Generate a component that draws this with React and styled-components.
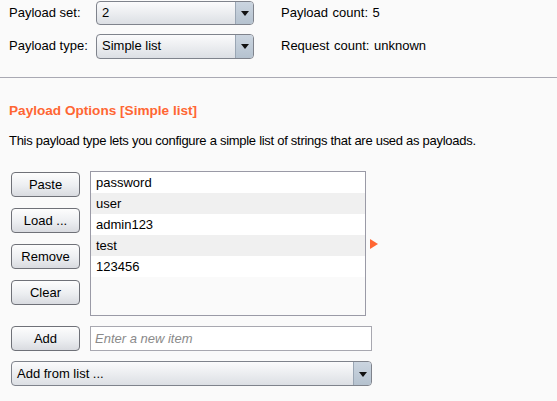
import React from "react";
import styled, { createGlobalStyle } from "styled-components";

const Global = createGlobalStyle`
  html, body { margin: 0; padding: 0; background: #fafafa; }
  body {
    font-family: "Liberation Sans", Arial, sans-serif;
    font-size: 13px;
    color: #000;
    width: 557px;
    height: 401px;
    overflow: hidden;
  }
`;

const Page = styled.div`
  width: 557px;
  height: 401px;
  background: #fafafa;
`;

const TopSection = styled.div`
  height: 76px;
  padding: 1px 0 0 9px;
  border-bottom: 1px solid #a9a9b3;
  display: grid;
  grid-template-columns: 87px 158px auto;
  grid-auto-rows: 24px;
  row-gap: 9px;
  column-gap: 0;
  align-items: center;
`;

const Label = styled.div`
  line-height: 16px;
  white-space: nowrap;
`;

const Stat = styled.div`
  padding-left: 27px;
  line-height: 16px;
  white-space: nowrap;
  word-spacing: 1px;
`;

const Select = styled.div`
  box-sizing: border-box;
  width: ${(p) => p.$w}px;
  height: ${(p) => p.$h || 24}px;
  border: 1px solid #7f838c;
  border-radius: 4px;
  background: linear-gradient(#fbfbfc, #eaecef 55%, #dcdfe4);
  display: flex;
  align-items: stretch;
  overflow: hidden;
`;

const SelectValue = styled.div`
  flex: 1;
  padding-left: 5px;
  display: flex;
  align-items: center;
  line-height: 16px;
`;

const SelectArrow = styled.div`
  width: 17px;
  border-left: 1px solid #9aa6b4;
  background: linear-gradient(#cbd5e0, #b5c2cf);
  display: flex;
  align-items: center;
  justify-content: center;
  &::after {
    content: "";
    border-left: 4px solid transparent;
    border-right: 4px solid transparent;
    border-top: 5px solid #111;
    margin-top: 1px;
  }
`;

const Options = styled.div`
  padding: 25px 0 0 9px;
`;

const Heading = styled.div`
  color: #ff6633;
  font-weight: bold;
  font-size: 13.6px;
  line-height: 16px;
`;

const Description = styled.div`
  margin-top: 14px;
  line-height: 16px;
  letter-spacing: -0.28px;
`;

const Editor = styled.div`
  margin-top: 22px;
  padding-left: 2px;
  display: flex;
  align-items: flex-start;
  gap: 10px;
`;

const ButtonColumn = styled.div`
  display: flex;
  flex-direction: column;
  gap: 11px;
  padding-top: 1px;
`;

const Button = styled.button`
  box-sizing: border-box;
  width: 69px;
  height: 25px;
  padding: 0;
  border: 1px solid #6f7178;
  border-radius: 4px;
  background: linear-gradient(#fdfdfd, #eceef1 55%, #d9dbe0);
  font-family: "Liberation Sans", Arial, sans-serif;
  font-size: 13px;
  color: #000;
`;

const ListWrap = styled.div`
  display: flex;
  align-items: center;
  gap: 4px;
`;

const List = styled.div`
  box-sizing: border-box;
  width: 276px;
  height: 145px;
  border: 1px solid #9a9aa6;
  background: #fafafa;
`;

const Row = styled.div`
  height: 21px;
  line-height: 21px;
  padding-left: 5px;
  background: ${(p) => (p.$alt ? "#f0f0f0" : "#ffffff")};
`;

const Marker = styled.div`
  width: 0;
  height: 0;
  border-top: 5px solid transparent;
  border-bottom: 5px solid transparent;
  border-left: 8px solid #ff6633;
`;

const AddRow = styled.div`
  margin-top: 10px;
  padding-left: 2px;
  display: flex;
  gap: 10px;
`;

const Input = styled.input`
  box-sizing: border-box;
  width: 282px;
  height: 25px;
  border: 1px solid #a8a8b0;
  background: #fff;
  padding: 0 0 0 4px;
  font-family: "Liberation Sans", Arial, sans-serif;
  font-size: 13px;
  outline: none;
  &::placeholder {
    color: #8a8a8a;
    font-style: italic;
  }
`;

const BottomSelect = styled.div`
  margin-top: 10px;
  padding-left: 2px;
`;

const items = ["password", "user", "admin123", "test", "123456"];

export default function App() {
  return (
    <Page>
      <Global />
      <TopSection>
        <Label>Payload set:</Label>
        <Select $w={158} $h={24}>
          <SelectValue>2</SelectValue>
          <SelectArrow />
        </Select>
        <Stat>Payload count:&nbsp;5</Stat>
        <Label>Payload type:</Label>
        <Select $w={158} $h={25}>
          <SelectValue>Simple list</SelectValue>
          <SelectArrow />
        </Select>
        <Stat>Request count:&nbsp;unknown</Stat>
      </TopSection>
      <Options>
        <Heading>Payload Options [Simple list]</Heading>
        <Description>
          This payload type lets you configure a simple list of strings that are used as payloads.
        </Description>
        <Editor>
          <ButtonColumn>
            <Button>Paste</Button>
            <Button>Load ...</Button>
            <Button>Remove</Button>
            <Button>Clear</Button>
          </ButtonColumn>
          <ListWrap>
            <List>
              {items.map((t, i) => (
                <Row key={t} $alt={i % 2 === 1}>{t}</Row>
              ))}
            </List>
            <Marker />
          </ListWrap>
        </Editor>
        <AddRow>
          <Button>Add</Button>
          <Input placeholder="Enter a new item" />
        </AddRow>
        <BottomSelect>
          <Select $w={361} $h={25}>
            <SelectValue>Add from list ...</SelectValue>
            <SelectArrow />
          </Select>
        </BottomSelect>
      </Options>
    </Page>
  );
}
